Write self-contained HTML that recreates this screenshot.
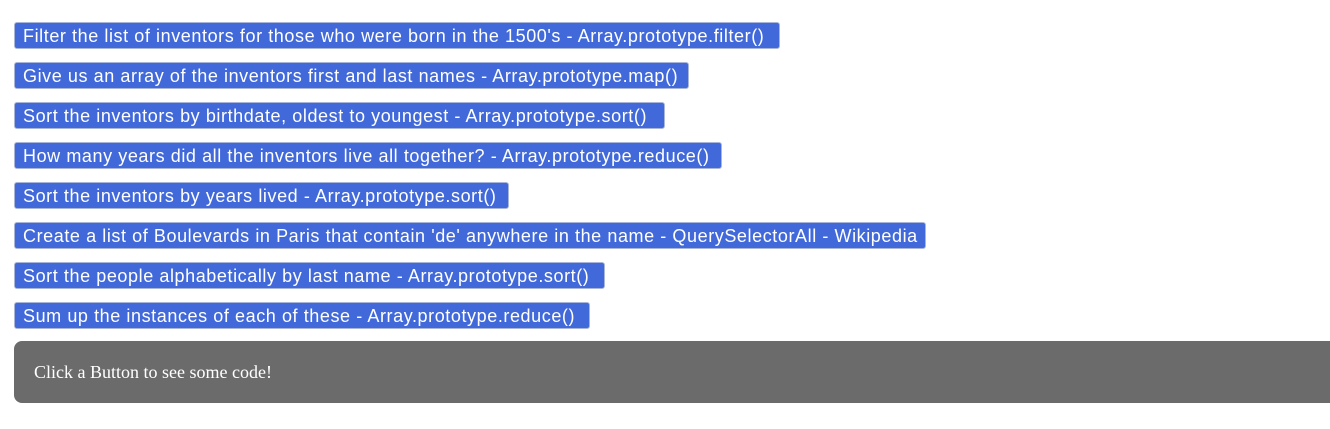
<!DOCTYPE html>
<html><head><style>
html,body{margin:0;padding:0;background:#fff;width:1330px;height:429px;overflow:hidden}
.b{position:absolute;left:14px;height:27px;background:#4169d9;border:1px solid #a9b6d9;border-radius:3px;box-sizing:border-box;color:#fff;font-family:"Liberation Sans",sans-serif;font-size:18px;letter-spacing:0.58px;line-height:26px;padding-left:8px;white-space:nowrap;overflow:hidden}
.code{position:absolute;left:14px;top:341px;width:1340px;height:62px;background:#6b6b6b;border-radius:8px;color:#fff;font-family:"Liberation Serif",serif;font-size:18px;line-height:62px;padding-left:20px;box-sizing:border-box}
</style></head><body>
<div class="b" style="top:22px;width:766px">Filter the list of inventors for those who were born in the 1500's - Array.prototype.filter()</div>
<div class="b" style="top:62px;width:675px">Give us an array of the inventors first and last names - Array.prototype.map()</div>
<div class="b" style="top:102px;width:651px">Sort the inventors by birthdate, oldest to youngest - Array.prototype.sort()</div>
<div class="b" style="top:142px;width:708px">How many years did all the inventors live all together? - Array.prototype.reduce()</div>
<div class="b" style="top:182px;width:495px">Sort the inventors by years lived - Array.prototype.sort()</div>
<div class="b" style="top:222px;width:912px">Create a list of Boulevards in Paris that contain 'de' anywhere in the name - QuerySelectorAll - Wikipedia</div>
<div class="b" style="top:262px;width:591px">Sort the people alphabetically by last name - Array.prototype.sort()</div>
<div class="b" style="top:302px;width:576px">Sum up the instances of each of these - Array.prototype.reduce()</div>
<div class="code">Click a Button to see some code!</div>
</body></html>
